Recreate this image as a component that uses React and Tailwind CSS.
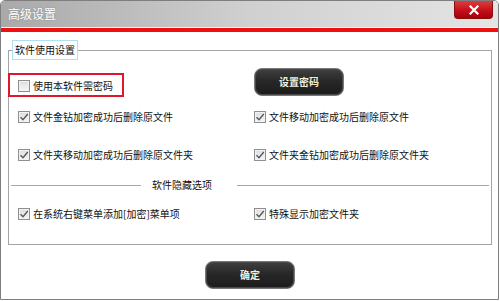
import React from "react";

const font = { fontFamily: '"Noto Sans CJK SC", "Noto Sans", sans-serif' };

function Check({ checked }) {
  return (
    <span className="relative w-[12px] h-[12px] shrink-0 border border-[#8f8f8f] bg-gradient-to-b from-[#dedede] to-[#f6f6f6] shadow-[inset_0_0_0_1px_#f2f2f2]">
      {checked && (
        <svg viewBox="0 0 12 12" className="absolute -left-px -top-px w-[12px] h-[12px]">
          <path d="M2.5 6.2 L5 8.8 L9.8 3" fill="none" stroke="#5a5a5a" strokeWidth="1.4" />
        </svg>
      )}
    </span>
  );
}

function Item({ checked = true, children }) {
  return (
    <div className="flex items-center gap-[3px] text-[10px] leading-none text-[#111]">
      <Check checked={checked} />
      <span>{children}</span>
    </div>
  );
}

function DarkButton({ children }) {
  return (
    <div className="w-[90px] h-[28px] rounded-[8px] border border-[#777] bg-gradient-to-b from-[#404040] via-[#262626] to-[#1c1c1c] shadow-[inset_0_0_0_1px_#4a4a4a] flex items-center justify-center text-[10px] font-bold text-[#f2f0dc] leading-none">
      {children}
    </div>
  );
}

export default function App() {
  return (
    <div style={font} className="w-[500px] h-[301px] bg-white">
      <div className="w-[499px] h-[300px] flex flex-col border border-[#7e7e7e] rounded-t-[5px] overflow-hidden bg-white">
        {/* title bar */}
        <div className="h-[27px] shrink-0 flex items-start justify-between bg-gradient-to-r from-[#a9a9a9] via-[#d0d0d0] to-[#e4e4e4] border-b border-[#f4f4f4]">
          <span className="pl-[7px] pt-[7px] text-[12px] leading-none text-white [text-shadow:0_0_2px_#888]">高级设置</span>
          <div className="mr-[5px] w-[39px] h-[18px] rounded-b-[4px] border border-t-0 border-[#8a1010] bg-gradient-to-b from-[#de3a40] via-[#c8121c] to-[#a8000a] flex items-center justify-center">
            <svg viewBox="0 0 10 10" className="w-[10px] h-[10px]">
              <path d="M1.5 1.5 L8.5 8.5 M8.5 1.5 L1.5 8.5" stroke="white" strokeWidth="2.2" strokeLinecap="square" />
            </svg>
          </div>
        </div>
        <div className="h-[4px] shrink-0 bg-[#ee1010]" />

        {/* body */}
        <div className="flex-1 flex flex-col pl-[7px] pr-[6px] pt-[18px]">
          <div className="relative h-[195px] border border-[#a4a4a4] pl-[9px] pr-[2px] flex flex-col">
            <span className="absolute left-[3px] -top-[11px] h-[20px] px-[2px] flex items-center bg-white border border-[#aee0f4] text-[10px] leading-none text-[#111]">
              软件使用设置
            </span>
            <div className="absolute left-[-1px] top-[22px] w-[116px] h-[24px] border-2 border-[#e0162c]" />

            <div className="mt-[17px] h-[28px] grid grid-cols-[236px_1fr]">
              <div className="h-[28px] flex items-center pt-[8px]">
                <Item checked={false}>使用本软件需密码</Item>
              </div>
              <DarkButton>设置密码</DarkButton>
            </div>

            <div className="mt-[11px] h-[20px] grid grid-cols-[236px_1fr] items-center">
              <Item>文件金钻加密成功后删除原文件</Item>
              <Item>文件移动加密成功后删除原文件</Item>
            </div>

            <div className="mt-[18px] h-[20px] grid grid-cols-[236px_1fr] items-center">
              <Item>文件夹移动加密成功后删除原文件夹</Item>
              <Item>文件夹金钻加密成功后删除原文件夹</Item>
            </div>

            <div className="mt-[10px] h-[20px] flex items-center -ml-[7px]">
              <div className="w-[130px] h-px bg-[#a8a8a8]" />
              <span className="ml-[11px] text-[10px] leading-none text-[#111]">软件隐藏选项</span>
              <div className="ml-[25px] flex-1 h-px bg-[#a8a8a8]" />
            </div>

            <div className="mt-[9px] h-[20px] grid grid-cols-[236px_1fr] items-center">
              <Item>在系统右键菜单添加[加密]菜单项</Item>
              <Item>特殊显示加密文件夹</Item>
            </div>
          </div>

          <div className="mt-[16px] flex justify-center">
            <DarkButton>确定</DarkButton>
          </div>
        </div>
      </div>
    </div>
  );
}
